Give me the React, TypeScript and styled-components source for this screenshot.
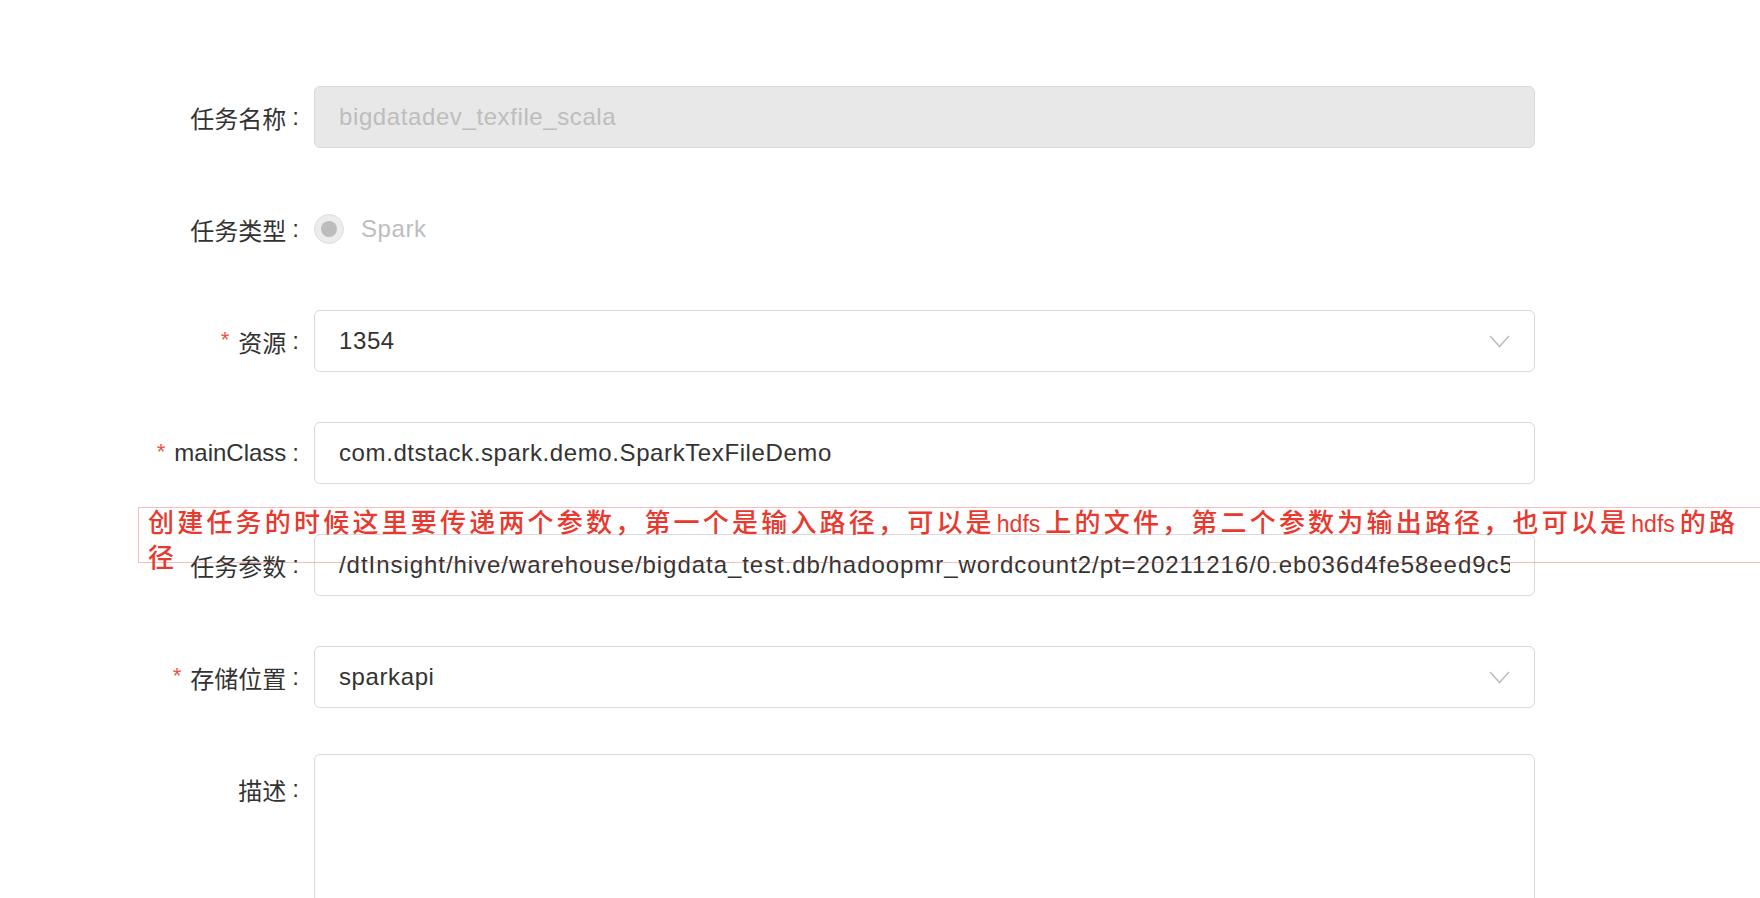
import styled, { createGlobalStyle } from "styled-components";

const GlobalStyle = createGlobalStyle`
  html, body {
    margin: 0;
    padding: 0;
    background: #fff;
    overflow: hidden;
  }
  body {
    font-family: "Liberation Sans", "Noto Sans CJK SC", sans-serif;
    color: #333;
  }
`;

const Page = styled.div`
  position: relative;
  width: 1760px;
  height: 898px;
  overflow: hidden;
  padding-top: 86px;
  box-sizing: border-box;
`;

const Form = styled.form`
  display: grid;
  grid-template-columns: 314px 1221px;
  row-gap: 50px;
  align-items: center;
`;

const Label = styled.label<{ $top?: boolean }>`
  display: flex;
  justify-content: flex-end;
  align-items: center;
  align-self: ${(p) => (p.$top ? "start" : "center")};
  height: 62px;
  padding-right: 15px;
  font-size: 24px;
  color: #333;
  white-space: nowrap;
`;

const Required = styled.span`
  color: #f0504a;
  font-family: "Liberation Sans", sans-serif;
  font-size: 22px;
  margin-right: 9px;
  position: relative;
  top: -1px;
`;

const Colon = styled.span`
  margin-left: 6px;
`;

const Field = styled.div<{ $disabled?: boolean }>`
  display: flex;
  align-items: center;
  height: 62px;
  box-sizing: border-box;
  padding: 0 24px;
  border: 1.5px solid #dadada;
  border-radius: 6px;
  background: ${(p) => (p.$disabled ? "#e8e8e8" : "#fff")};
  color: ${(p) => (p.$disabled ? "#bdbdbd" : "#333")};
  font-size: 24px;
  letter-spacing: 0.6px;
  white-space: nowrap;
  overflow: hidden;
`;

const FieldText = styled.span<{ $wide?: boolean }>`
  flex: 1;
  overflow: hidden;
  letter-spacing: ${(p) => (p.$wide ? "0.95px" : "inherit")};
`;

const Chevron = styled.svg`
  flex: none;
  width: 21px;
  height: 13px;
  margin-left: 12px;
`;

const TextArea = styled.div`
  height: 220px;
  margin-top: -4px;
  box-sizing: border-box;
  border: 1.5px solid #dadada;
  border-radius: 6px;
  background: #fff;
`;

const RadioRow = styled.div`
  display: flex;
  align-items: center;
  height: 62px;
  gap: 17px;
`;

const RadioCircle = styled.span`
  width: 30px;
  height: 30px;
  box-sizing: border-box;
  border-radius: 50%;
  border: 1.5px solid #dedede;
  background: #ececec;
  display: flex;
  align-items: center;
  justify-content: center;

  &::after {
    content: "";
    width: 16px;
    height: 16px;
    border-radius: 50%;
    background: #bcbcbc;
  }
`;

const RadioText = styled.span`
  font-size: 24px;
  color: #bdbdbd;
  letter-spacing: 0.6px;
`;

const Note = styled.div`
  position: absolute;
  left: 138px;
  top: 507px;
  right: -20px;
  height: 56px;
  box-sizing: border-box;
  border: 1px solid rgba(235, 70, 60, 0.35);
  padding-left: 9px;
  pointer-events: none;
`;

const NoteText = styled.div`
  margin-top: -3px;
  font-family: "Noto Sans CJK SC", sans-serif;
  font-size: 26px;
  font-weight: 500;
  line-height: 31px;
  letter-spacing: 3.2px;
  color: #e8392f;
  white-space: nowrap;
`;

const Latin = styled.span`
  font-family: "Liberation Sans", sans-serif;
  font-size: 23px;
  letter-spacing: 0;
  margin: 0 5px 0 2px;
`;

function Select({ value }: { value: string }) {
  return (
    <Field>
      <FieldText>{value}</FieldText>
      <Chevron viewBox="0 0 21 13">
        <polyline
          points="1,1 10.5,11.5 20,1"
          fill="none"
          stroke="#bfbfbf"
          strokeWidth="1.6"
        />
      </Chevron>
    </Field>
  );
}

export default function App() {
  return (
    <>
      <GlobalStyle />
      <Page>
        <Form>
          <Label>
            任务名称<Colon>:</Colon>
          </Label>
          <Field $disabled>bigdatadev_texfile_scala</Field>

          <Label>
            任务类型<Colon>:</Colon>
          </Label>
          <RadioRow>
            <RadioCircle />
            <RadioText>Spark</RadioText>
          </RadioRow>

          <Label>
            <Required>*</Required>资源<Colon>:</Colon>
          </Label>
          <Select value="1354" />

          <Label>
            <Required>*</Required>mainClass<Colon>:</Colon>
          </Label>
          <Field>com.dtstack.spark.demo.SparkTexFileDemo</Field>

          <Label>
            任务参数<Colon>:</Colon>
          </Label>
          <Field>
            <FieldText $wide>
              /dtInsight/hive/warehouse/bigdata_test.db/hadoopmr_wordcount2/pt=20211216/0.eb036d4fe58eed9c5a1b
            </FieldText>
          </Field>

          <Label>
            <Required>*</Required>存储位置<Colon>:</Colon>
          </Label>
          <Select value="sparkapi" />

          <Label $top>
            描述<Colon>:</Colon>
          </Label>
          <TextArea />
        </Form>

        <Note>
          <NoteText>
            创建任务的时候这里要传递两个参数，第一个是输入路径，可以是<Latin>hdfs</Latin>上的文件，第二个参数为输出路径，也可以是<Latin>hdfs</Latin>的路
            <br />径
          </NoteText>
        </Note>
      </Page>
    </>
  );
}
